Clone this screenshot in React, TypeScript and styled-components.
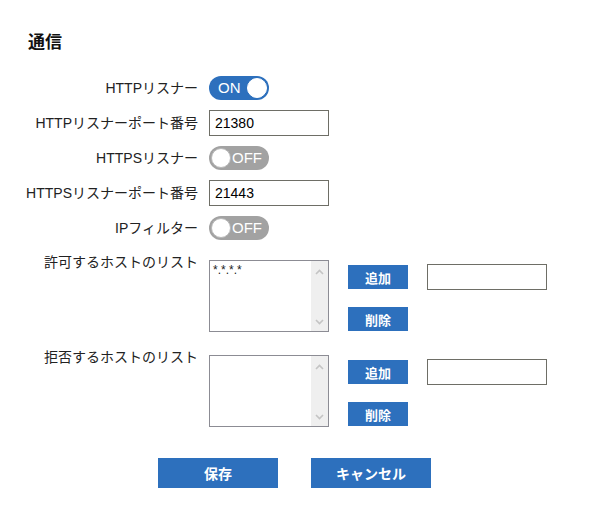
import React, { useState } from 'react';
import styled, { createGlobalStyle } from 'styled-components';

const GlobalStyle = createGlobalStyle`
  html, body {
    margin: 0;
    padding: 0;
    background: #ffffff;
  }
  body {
    font-family: "Liberation Sans", "Noto Sans CJK JP", sans-serif;
    color: #222222;
  }
`

const BLUE = '#2d70bd'

type ListProps = {
  label: string
  items: string
  top: number
}

function HostList({ label, items, top }: ListProps) {
  const [value, setValue] = useState(items)
  return (
    <ListRow $top={top}>
      <Label>{label}</Label>
      <ListControls>
        <ListBox>
          <ListArea value={value} onChange={(e) => setValue(e.target.value)} />
          <ScrollTrack>
            <svg width="9" height="6" viewBox="0 0 9 6">
              <path d="M1 5 L4.5 1.5 L8 5" fill="none" stroke="#c4c4c4" strokeWidth="1.6" />
            </svg>
            <svg width="9" height="6" viewBox="0 0 9 6">
              <path d="M1 1 L4.5 4.5 L8 1" fill="none" stroke="#c4c4c4" strokeWidth="1.6" />
            </svg>
          </ScrollTrack>
        </ListBox>
        <ButtonColumn>
          <SmallButton>追加</SmallButton>
          <SmallButton>削除</SmallButton>
        </ButtonColumn>
        <HostInput type="text" />
      </ListControls>
    </ListRow>
  )
}

function Toggle({ initial }: { initial: boolean }) {
  const [on, setOn] = useState(initial)
  return (
    <Switch $on={on} onClick={() => setOn(!on)}>
      <SwitchText>{on ? 'ON' : 'OFF'}</SwitchText>
      <Knob $on={on} />
    </Switch>
  )
}

function App() {
  return (
    <Page>
      <GlobalStyle />
      <Title>通信</Title>
      <Form>
        <Row>
          <Label>HTTPリスナー</Label>
          <Toggle initial={true} />
        </Row>
        <Row>
          <Label>HTTPリスナーポート番号</Label>
          <PortInput type="text" defaultValue="21380" />
        </Row>
        <Row>
          <Label>HTTPSリスナー</Label>
          <Toggle initial={false} />
        </Row>
        <Row>
          <Label>HTTPSリスナーポート番号</Label>
          <PortInput type="text" defaultValue="21443" />
        </Row>
        <Row>
          <Label>IPフィルター</Label>
          <Toggle initial={false} />
        </Row>
        <HostList label="許可するホストのリスト" items="*.*.*.*" top={2} />
        <HostList label="拒否するホストのリスト" items="" top={5} />
      </Form>
      <Actions>
        <ActionButton>保存</ActionButton>
        <ActionButton>キャンセル</ActionButton>
      </Actions>
    </Page>
  );
}

export default App;

const Page = styled.div`
  width: 589px;
  padding: 32px 0 28px;
  box-sizing: border-box;
`

const Title = styled.h2`
  margin: 0 0 0 28px;
  font-size: 17px;
  line-height: 22px;
  font-weight: bold;
  color: #111111;
`

const Form = styled.div`
  display: flex;
  flex-direction: column;
  gap: 10px;
  margin-top: 22px;
`

const Row = styled.div`
  display: grid;
  grid-template-columns: 198px auto;
  column-gap: 11px;
  align-items: center;
  justify-content: start;
  min-height: 24px;
`

const Label = styled.div`
  text-align: right;
  font-size: 14px;
  line-height: 20px;
  color: #222222;
  white-space: nowrap;
`

const Switch = styled.div<{ $on: boolean }>`
  position: relative;
  width: 60px;
  height: 24px;
  border-radius: 12px;
  background: ${(p) => (p.$on ? BLUE : '#a2a2a2')};
  cursor: pointer;
  display: flex;
  align-items: center;
  justify-content: ${(p) => (p.$on ? 'flex-start' : 'flex-end')};
  box-sizing: border-box;
  padding: ${(p) => (p.$on ? '0 0 0 9px' : '0 7px 0 0')};
`

const SwitchText = styled.span`
  color: #ffffff;
  font-size: 15px;
  line-height: 24px;
`

const Knob = styled.span<{ $on: boolean }>`
  position: absolute;
  top: 2px;
  left: ${(p) => (p.$on ? '38px' : '2px')};
  width: 20px;
  height: 20px;
  border-radius: 50%;
  background: #ffffff;
  box-sizing: border-box;
  border: 1px solid ${(p) => (p.$on ? '#ffffff' : '#b8b8b8')};
`

const PortInput = styled.input`
  width: 120px;
  height: 26px;
  box-sizing: border-box;
  border: 1px solid #6e6e66;
  border-radius: 0;
  padding: 0 5px;
  font-family: "Liberation Sans", sans-serif;
  font-size: 14px;
  color: #000000;
  outline: none;
`

const ListRow = styled.div<{ $top: number }>`
  display: grid;
  grid-template-columns: 198px auto;
  column-gap: 11px;
  align-items: start;
  justify-content: start;
  margin-top: ${(p) => p.$top}px;
`

const ListControls = styled.div`
  display: flex;
  align-items: flex-start;
  gap: 19px;
  padding-top: 8px;
`

const ListBox = styled.div`
  display: flex;
  width: 120px;
  height: 72px;
  box-sizing: border-box;
  border: 1px solid #8c8c94;
  background: #ffffff;
`

const ListArea = styled.textarea`
  flex: 1;
  min-width: 0;
  border: none;
  outline: none;
  resize: none;
  overflow: hidden;
  padding: 2px 3px;
  font-family: "Liberation Sans", sans-serif;
  font-size: 12px;
  line-height: 15px;
  color: #222222;
`

const ScrollTrack = styled.div`
  width: 17px;
  background: #efefef;
  display: flex;
  flex-direction: column;
  align-items: center;
  justify-content: space-between;
  padding: 8px 0 6px;
  box-sizing: border-box;
`

const ButtonColumn = styled.div`
  display: flex;
  flex-direction: column;
  gap: 18px;
  padding-top: 5px;
`

const SmallButton = styled.button`
  width: 60px;
  height: 24px;
  border: none;
  border-radius: 0;
  background: ${BLUE};
  color: #ffffff;
  font-family: "Noto Sans CJK JP", sans-serif;
  font-weight: bold;
  font-size: 13px;
  padding: 0;
  cursor: pointer;
`

const HostInput = styled.input`
  width: 120px;
  height: 26px;
  margin-top: 4px;
  box-sizing: border-box;
  border: 1px solid #6e6e66;
  border-radius: 0;
  padding: 0 5px;
  font-size: 14px;
  outline: none;
`

const Actions = styled.div`
  display: flex;
  justify-content: center;
  gap: 33px;
  margin-top: 31px;
`

const ActionButton = styled.button`
  width: 120px;
  height: 30px;
  border: none;
  border-radius: 0;
  background: ${BLUE};
  color: #ffffff;
  font-family: "Noto Sans CJK JP", sans-serif;
  font-weight: bold;
  font-size: 14px;
  padding: 0;
  cursor: pointer;
`
